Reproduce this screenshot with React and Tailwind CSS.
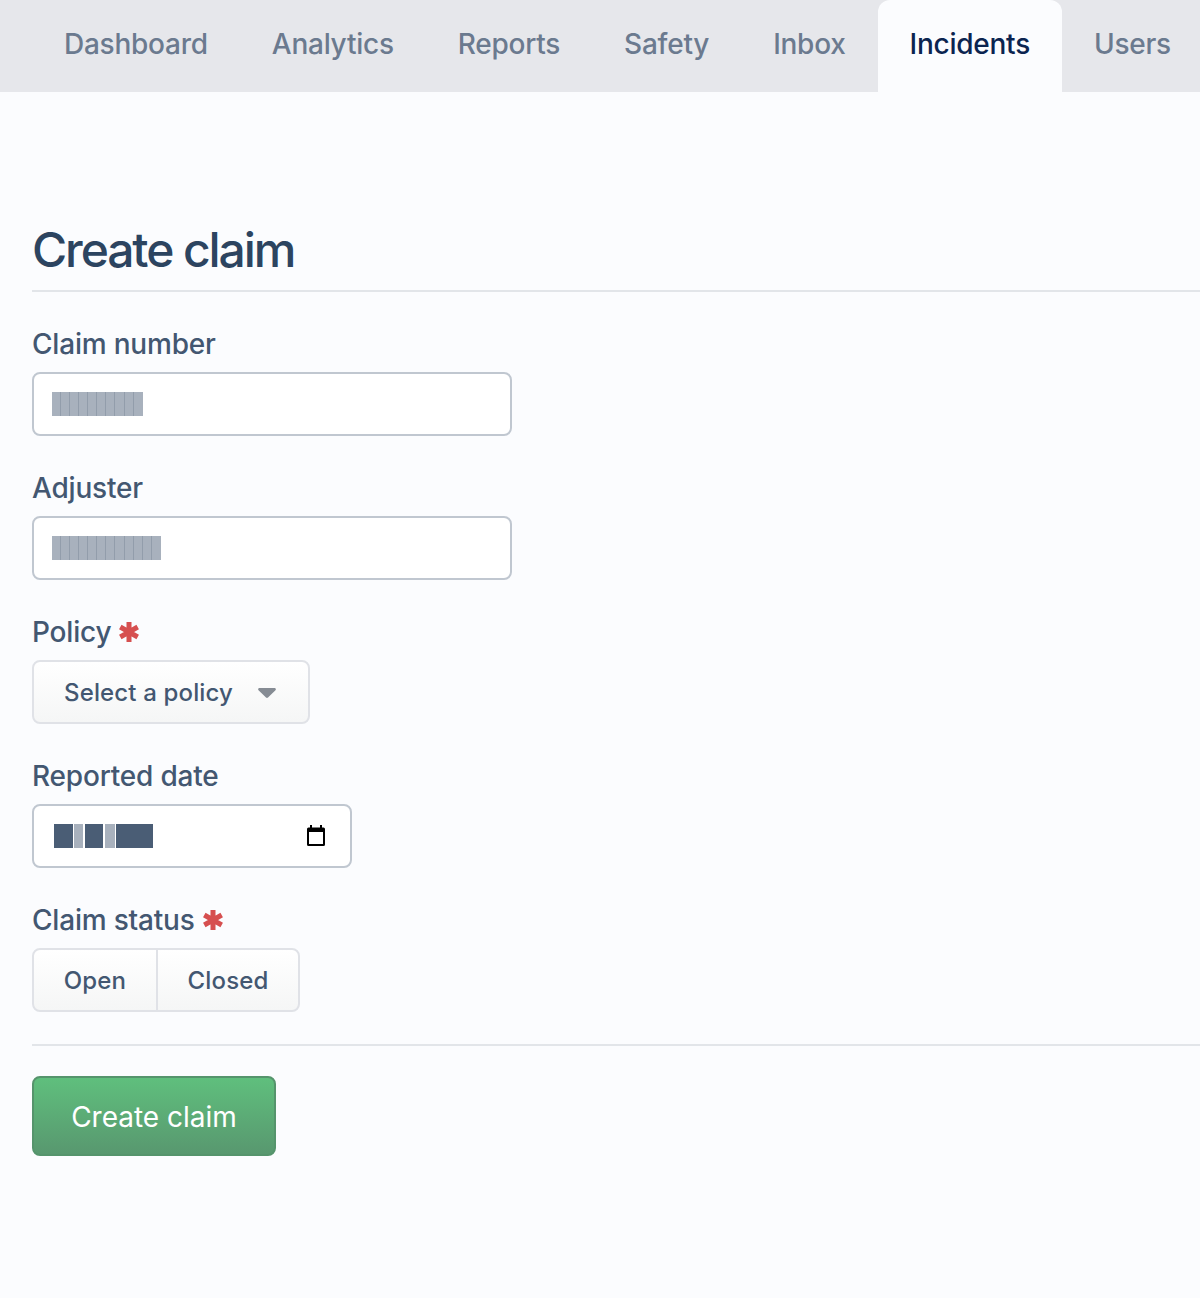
import React from "react";

const tabs = ["Dashboard", "Analytics", "Reports", "Safety", "Inbox", "Incidents", "Users"];

function Asterisk() {
  return (
    <svg viewBox="0 0 20 20" className="ml-2 size-5 text-[#d64f4f]" stroke="currentColor" strokeWidth="5">
      <path d="M10 0v20M1.300 5l17.400 10M1.300 15L18.700 5" />
    </svg>
  );
}

function Label({ children, required }) {
  return (
    <div className="mb-2 flex h-10 items-center text-[28px] leading-10 font-medium tracking-[-0.2px] text-[#435771]">
      {children}
      {required && <Asterisk />}
    </div>
  );
}

function Masked({ cells }) {
  return (
    <div className="flex h-6">
      {Array.from({ length: cells }).map((_, i) => (
        <div key={i} className="h-6 w-[9.07px] border-r border-[#929dab] bg-[#a8b1bd] last:border-r-0" />
      ))}
    </div>
  );
}

function TextField({ label, cells }) {
  return (
    <div className="mb-8">
      <Label>{label}</Label>
      <div className="flex h-16 w-[480px] items-center rounded-lg border-2 border-[#c0c7d0] bg-white pl-[18px]">
        <Masked cells={cells} />
      </div>
    </div>
  );
}

function CalendarIcon() {
  return (
    <svg viewBox="0 0 18 21" className="mb-0.5 h-[21px] w-[18px] text-black" fill="currentColor">
      <path d="M3 0h2v2.500h8V0h2v2.500h1.500A1.500 1.500 0 0 1 18 4v15.500a1.500 1.500 0 0 1-1.500 1.500h-15A1.500 1.500 0 0 1 0 19.500V4a1.500 1.500 0 0 1 1.500-1.500H3V0Zm-1 7v12h14V7H2Z" />
    </svg>
  );
}

export default function App() {
  return (
    <div className="min-h-[1298px] overflow-hidden bg-[#fbfcfe] font-['Inter',sans-serif]">
      <nav className="flex h-[92px] bg-[#e6e7eb] pl-8">
        {tabs.map((tab) => (
          <div
            key={tab}
            className={
              tab === "Incidents"
                ? "flex items-center rounded-t-xl bg-[#fbfcfe] px-8 pb-1 text-[28px] font-medium tracking-[-0.25px] whitespace-nowrap text-[#0b2450]"
                : "flex items-center px-8 pb-1 text-[28px] font-medium tracking-[-0.25px] whitespace-nowrap text-[#6b7a8f]"
            }
          >
            {tab}
          </div>
        ))}
      </nav>

      <main className="pt-[130px] pl-8">
        <h1 className="mb-3 h-14 text-[48px] leading-14 font-[550] tracking-[-2.1px] text-[#2c4460]">Create claim</h1>
        <hr className="mb-8 h-0.5 border-0 bg-[#e2e5e9]" />

        <TextField label="Claim number" cells={10} />
        <TextField label="Adjuster" cells={12} />

        <div className="mb-8">
          <Label required>Policy</Label>
          <div className="flex h-16 w-[278px] items-center rounded-lg border-2 border-[#e0e2e7] bg-gradient-to-b from-white to-[#f5f6f6] pt-0.5 pl-[30px] text-2xl font-medium tracking-[0.15px] text-[#435771]">
            Select a policy
            <svg viewBox="0 0 18 10" className="ml-[25px] h-2.5 w-[18px] text-[#868c94]" fill="currentColor">
              <path d="M1.500 0h15c1.200 0 1.800 1.400 1 2.200L10 9.500c-.6.600-1.400.600-2 0L.5 2.200C-.3 1.400.3 0 1.500 0Z" />
            </svg>
          </div>
        </div>

        <div className="mb-8">
          <Label>Reported date</Label>
          <div className="flex h-16 w-80 items-center justify-between rounded-lg border-2 border-[#c0c7d0] bg-white pr-[25px] pl-5">
            <div className="flex h-6 gap-[1.3px]">
              <div className="w-[18.7px] bg-[#4a5d75]" />
              <div className="w-[9.3px] bg-[#a8b1bd]" />
              <div className="w-[18.7px] bg-[#4a5d75]" />
              <div className="w-[10px] bg-[#a8b1bd]" />
              <div className="w-[36.7px] bg-[#4a5d75]" />
            </div>
            <CalendarIcon />
          </div>
        </div>

        <div className="mb-8">
          <Label required>Claim status</Label>
          <div className="flex h-16 w-[268px] rounded-lg border-2 border-[#e0e2e7] bg-gradient-to-b from-white to-[#f5f6f6] text-2xl font-medium tracking-[0.15px] text-[#435771]">
            <div className="flex w-[124px] items-center justify-center border-r-2 border-[#e0e2e7] pt-0.5">Open</div>
            <div className="flex flex-1 items-center justify-center pt-0.5">Closed</div>
          </div>
        </div>

        <hr className="mb-[30px] h-0.5 border-0 bg-[#e2e5e9]" />

        <button className="flex h-20 w-[244px] items-center justify-center rounded-lg border-2 border-[#55946c] bg-gradient-to-b from-[#5fbf7d] to-[#58986f] pt-0.5 text-[28px] text-white">
          Create claim
        </button>
      </main>
    </div>
  );
}
